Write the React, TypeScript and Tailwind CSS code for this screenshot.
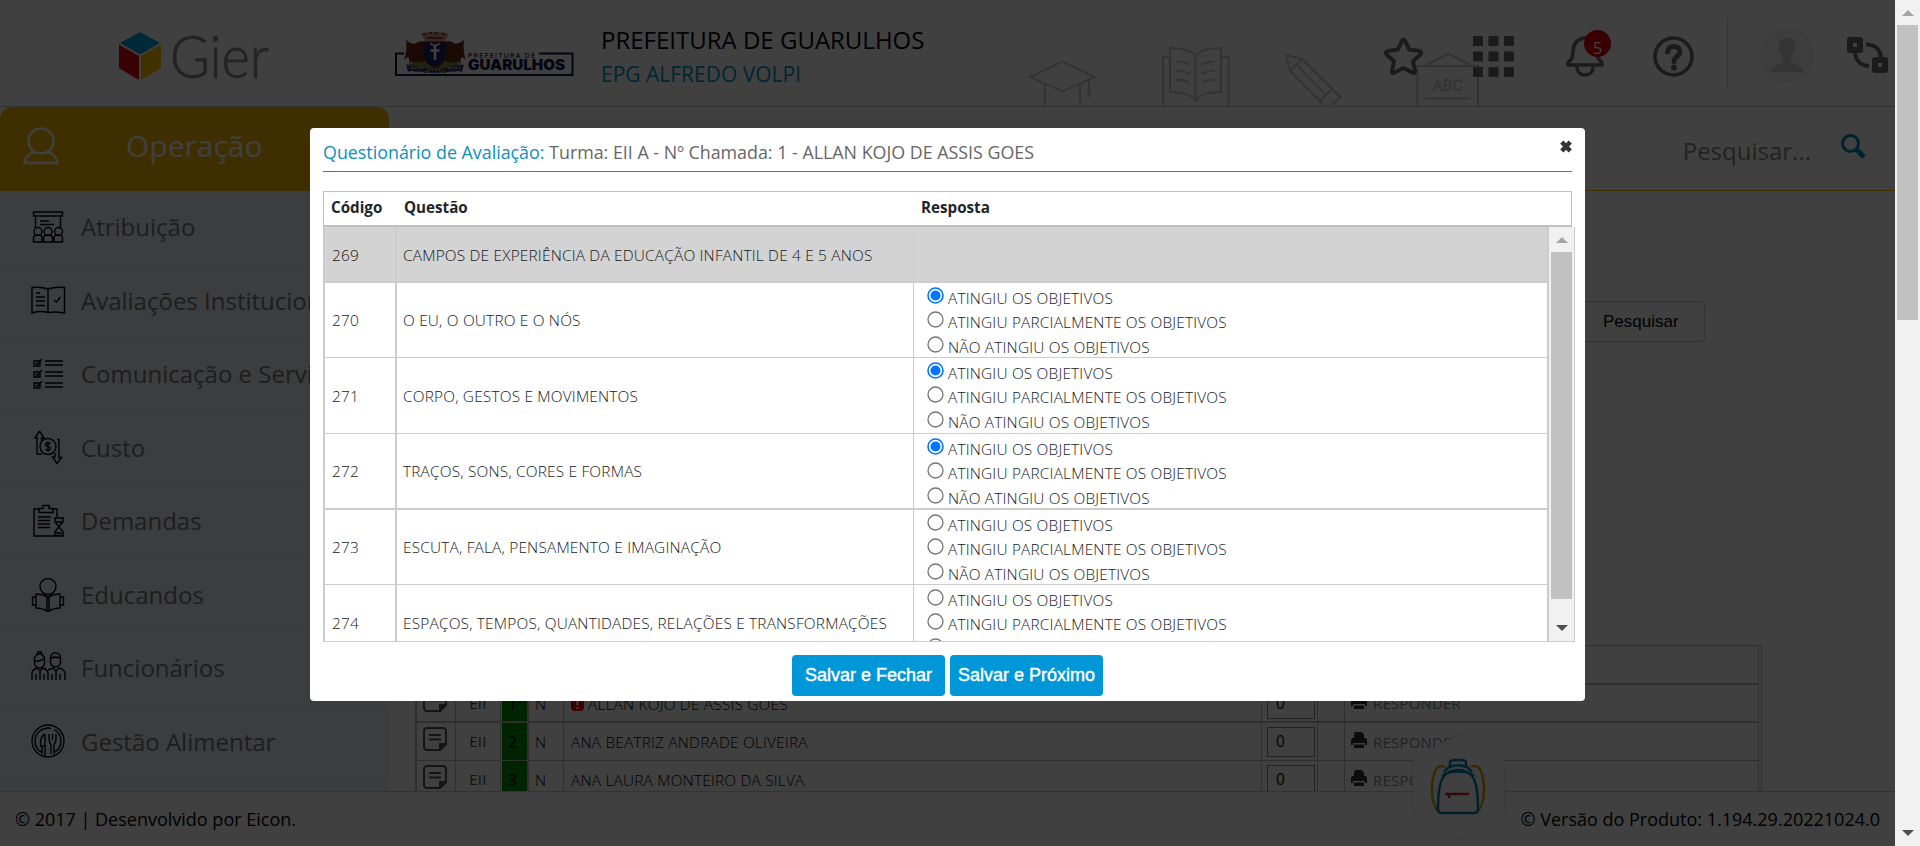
import React from "react";

type Answer = 0 | 1 | 2 | null;

interface Question {
  code: string;
  text: string;
  answer: Answer;
  rowClass: string;
}

const OPTIONS = [
  "ATINGIU OS OBJETIVOS",
  "ATINGIU PARCIALMENTE OS OBJETIVOS",
  "NÃO ATINGIU OS OBJETIVOS",
];

const QUESTIONS: Question[] = [
  { code: "270", text: "O EU, O OUTRO E O NÓS", answer: 0, rowClass: "h-[75px] border-b" },
  { code: "271", text: "CORPO, GESTOS E MOVIMENTOS", answer: 0, rowClass: "h-[76px] border-b" },
  { code: "272", text: "TRAÇOS, SONS, CORES E FORMAS", answer: 0, rowClass: "h-[76px] border-b-2" },
  { code: "273", text: "ESCUTA, FALA, PENSAMENTO E IMAGINAÇÃO", answer: null, rowClass: "h-[75px] border-b" },
  { code: "274", text: "ESPAÇOS, TEMPOS, QUANTIDADES, RELAÇÕES E TRANSFORMAÇÕES", answer: null, rowClass: "h-[76px]" },
];

const STUDENTS = [
  { n: 1, name: "ALLAN KOJO DE ASSIS GOES", alert: true, rowClass: "h-[38px] border-b-2" },
  { n: 2, name: "ANA BEATRIZ ANDRADE OLIVEIRA", alert: false, rowClass: "h-[38px] border-b" },
  { n: 3, name: "ANA LAURA MONTEIRO DA SILVA", alert: false, rowClass: "h-[38px] border-b" },
];

function GierLogo() {
  return (
    <svg className="h-[60px] w-[160px] overflow-visible" viewBox="0 0 160 60">
      <path d="M21 5 41 16 21 27.500 1 16Z" fill="#00a0d8" />
      <path d="M0 17.500 20 29V53L0 41Z" fill="#e30613" />
      <path d="M42 17.500 22 29V53L42 41Z" fill="#fcc800" />
      <text x="51" y="50.500" fill="#8c8c8c" stroke="#8c8c8c" strokeWidth="0.8" fontSize="59" fontWeight="300" textLength="99" lengthAdjust="spacingAndGlyphs" fontFamily="Lato, sans-serif">
        Gier
      </text>
    </svg>
  );
}

function CityLogo() {
  return (
    <svg className="h-[50px] w-[180px]" viewBox="0 0 180 50">
      <path d="M10 23.500H2V45H178.500V23.500H145" fill="none" stroke="#15124a" strokeWidth="2" />
      <path d="M12 9c1 3 5 4 8 5l6-3c4 1 5 4 5 8v12l-8 6c-4-1-5-3-5-6l-3 3c1-4 0-5-1-7l-4 3c2-5 3-12 2-21Z" fill="#6b2a12" />
      <path d="M70 9c-1 3-5 4-8 5l-6-3c-4 1-5 4-5 8v12l8 6c4-1 5-3 5-6l3 3c-1-4 0-5 1-7l4 3c-2-5-3-12-2-21Z" fill="#6b2a12" />
      <path d="M27 4c4-3 24-3 28 0l-4 7H31Z" fill="#c9a08c" />
      <path d="M29 4h3m3-1h3m3 0h3m4 1h3M33 8h16" stroke="#8f1d1d" strokeWidth="1.500" />
      <path d="M29 12h24v11c0 8-5 12-12 15-7-3-12-7-12-15Z" fill="#23226b" stroke="#7a1c1c" strokeWidth="1.500" />
      <path d="M41 16v14M36.500 20.500h9" stroke="#fff" strokeWidth="2.500" />
      <path d="M36.500 13c1 3 8 3 9 0" stroke="#fff" strokeWidth="1.500" fill="none" />
      <path d="M14 35c8-5 12-2 17-3l10 7 10-7c5 1 9-2 17 3l-6 7H20Z" fill="#7d8c3a" />
      <path d="M12 34c6 4 9 1 13 3s26 3 32 0 7 1 13-3l-2 8c-7-2-10-1-16 0-4 1-18 1-22 0-6-1-9-2-16 0Z" fill="#33326f" />
      <path d="M17 38h12M34 40h14M54 38h12" stroke="#c7c7d8" strokeWidth="1.500" strokeDasharray="2 1.500" />
      <path d="M30 43l4-2M48 41l4 2" stroke="#b58b1e" strokeWidth="2" />
      <text x="74" y="27.500" fill="#15124a" fontSize="6.800" fontWeight="500" textLength="67" fontFamily="Inter, sans-serif">PREFEITURA DE</text>
      <text x="74" y="39.500" fill="#15124a" fontSize="14" fontWeight="900" textLength="97" lengthAdjust="spacingAndGlyphs" fontFamily="Inter, sans-serif">GUARULHOS</text>
    </svg>
  );
}

function HeaderDrawings() {
  return (
    <svg className="absolute bottom-0 left-[1020px] h-[60px] w-[480px]" viewBox="1020 47 480 60" fill="none" stroke="#ccc" strokeWidth="2">
      <path d="M1030 78 1062.500 62.500 1095 78 1062.500 92.500ZM1045 85V107M1080 85V107M1089 80V98M1087 94h4M1087 97h4" />
      <path d="M1170 58H1163V107M1221 58H1228.500V107" />
      <path d="M1195.500 57C1191 51 1182 49 1170 49V93C1182 93 1191 95 1195.500 102C1200 95 1209 93 1221 93V49C1209 49 1200 51 1195.500 57ZV102" />
      <path d="M1176.500 62.500q7 .5 13 3M1176.500 71.500q7 .5 13 3M1176.500 80.500q7 .5 13 3M1214.500 62.500q-7 .5-13 3M1214.500 71.500q-7 .5-13 3M1214.500 80.500q-7 .5-13 3" />
      <path d="M1286 56 1302 60 1340.500 98 1332 106M1286 56 1290 72 1324 106.500M1302 60 1290 72M1296.500 66 1326 96M1332 90 1319 103" />
      <path d="M1417.500 107V67H1478V107M1426 66 1448.500 54.500 1471 66M1425 99.500H1469.500" />
      <text x="1432.500" y="92" stroke="none" fill="#c8c8c8" fontSize="17" fontWeight="500" textLength="30" lengthAdjust="spacingAndGlyphs" fontFamily="Roboto, sans-serif">ABC</text>
    </svg>
  );
}

function HeaderIcons() {
  return (
    <div className="relative flex h-full items-center text-[#6c6c6c]">
      <svg className="mt-[6px] h-[41px] w-[43px]" viewBox="0 0 43 41" fill="none" stroke="currentColor" strokeWidth="4" strokeLinejoin="round">
        <path d="M21.500 3.500c1 0 1.400.8 1.700 1.500l4 8.500 10 1.500c2.300.4 2.600 2 1.200 3.500l-7.400 6.800 2 9.700c.3 1.800-.7 2.500-2.200 1.700l-9.300-4.700-9.300 4.700c-1.500.8-2.500.1-2.200-1.700l2-9.700-7.400-6.800c-1.400-1.500-1.100-3.100 1.200-3.500l10-1.500 4-8.500c.3-.7.700-1.500 1.700-1.500Z" />
      </svg>
      <svg className="ml-[48px] mt-[7px] h-[41px] w-[41px]" viewBox="0 0 41 41" fill="currentColor">
        {[0, 15.5, 31].map((x) =>
          [0, 15.5, 31].map((y) => <rect key={`${x}-${y}`} x={x} y={y} width="10" height="10" rx="1" />)
        )}
      </svg>
      <div className="relative ml-[52px] mt-[7px] h-[41px] w-[38px]">
        <svg className="h-[41px] w-[38px]" viewBox="0 0 38 41" fill="none" stroke="currentColor" strokeWidth="3.500" strokeLinejoin="round">
          <path d="M19 2C10 3 7 9 7 16 7 22 5 24 2 26.500V29H36V26.500C33 24 31 22 31 16 31 9 28 3 19 2ZM11 31c0 5 3 8 8 8s8-3 8-8" />
        </svg>
        <span className="absolute -top-[6px] left-[18px] flex h-[27px] w-[27px] items-center justify-center rounded-full bg-[#e00008] pt-[7px] text-[17px] leading-none text-white">5</span>
      </div>
      <svg className="ml-[49px] mt-[7px] h-[41px] w-[41px]" viewBox="0 0 41 41" fill="none" stroke="currentColor">
        <circle cx="20.500" cy="20.500" r="18.500" strokeWidth="3.500" />
        <path d="M14.500 16c.5-7.500 12.500-7 12.500-.5 0 5-6 4.500-6 10" strokeWidth="5" strokeLinecap="round" />
        <circle cx="21" cy="31.500" r="3" fill="currentColor" stroke="none" />
      </svg>
      <div className="ml-[33px] mt-[2px] h-[72px] w-px bg-[#ccc]" />
      <svg className="ml-[33px] mt-[3px] h-[54px] w-[52px]" viewBox="0 0 52 54">
        <rect width="52" height="54" rx="23" fill="#f4f4f4" />
        <path d="M26 9.500c5 0 8.500 4 8 9 0 5-2 8-4 10v5c1 3 12 3 12.500 10.500h-33C10 36.500 21 36.500 22 33.500v-5c-2-2-4-5-4-10-.5-5 3-9 8-9Z" fill="#d0d0d0" />
      </svg>
      <svg className="ml-[34px] mt-[4px] h-[37px] w-[41px]" viewBox="0 0 41 37" fill="none" stroke="currentColor">
        <path d="M3 3h10v10H3ZM28 23h10v10H28Z" strokeWidth="6" strokeLinejoin="round" />
        <path d="M8 16c1 8 5 12 14 13M19 7.500c9 0 14 5 15 13" strokeWidth="4" />
      </svg>
    </div>
  );
}

function MenuIcon({ name }: { name: string }) {
  const shapes: Record<string, React.ReactNode> = {
    Atribuição: (
      <path d="M2.500 2h29v4h-29ZM4.500 6v13M29.500 6v13M9 11h9M9 14.500h14M2.500 32v-4c0-2 1-3 4.500-3s4 1 4 3v4ZM12.500 32v-4c0-2 1-3 4.500-3s4.500 1 4.500 3v4ZM23 32v-4c0-2 1-3 4.500-3s4 1 4 3v4ZM3 21.500a4 4 0 1 0 8 0a4 4 0 1 0-8 0M13 21.500a4 4 0 1 0 8 0a4 4 0 1 0-8 0M23.500 21.500a4 4 0 1 0 8 0a4 4 0 1 0-8 0" />
    ),
    "Avaliações Institucionais": (
      <path d="M17 6C12 4 7 4 1 4.500V30c5-1.500 11-2 16-.5 5-1 11-.5 16.500.5V4.500C28 4 22 4 17 6V29.500M5 10h4M5 14h9M5 18h9M5 22.500h9M23 17l2.500 2 4-5" />
    ),
    "Comunicação e Serviços": (
      <path d="M3 4h6v5H3ZM3 15h6v5H3ZM3 26h6v5H3ZM4.500 6l2 1.500L11 2M4.500 17l2 1.500L11 13M4.500 28l2 1.500L11 24M14 4h18M14 8h18M14 15h18M14 19h18M14 26h18M14 30h18" />
    ),
    Custo: (
      <path d="M8.500 1 13 8h-2.500V11M8.500 1 4 8h2V24h5M26 9.500h2v18h2.500L26 33.500 21.500 27H24V23M28 9.500v17M9 16.500a8 8 0 1 0 16 0a8 8 0 1 0-16 0M19.500 14c-1-2-5-1.500-5 .5s5 2 5 4-4 2.500-5 .5M17 11.500v10" />
    ),
    Demandas: (
      <path d="M8 5H3V32h30M22 5h4v8M8 8.500h14V4.500h-4V1.500h-6v3H8ZM7 13h13M7 16.500h12M7 20h12M7 23.500h12M23 14h10M23 31.500h10M24 14v4l4 4.500 4-4.500v-4M24 31.500v-4l4-4.500 4 4.500v4M25 18h6M25 29h6" />
    ),
    Educandos: (
      <path d="M9 9.500a8 8 0 1 0 16 0a8 8 0 1 0-16 0M17 20c-4-2-8-3-12-3v14c4 0 8 1 12 3.500 4-2.500 8-3.500 12-3.500V17c-4 0-8 1-12 3ZM16 20v14M18 20v14M5 20H1.500v8H5M29 20h3.500v8H29" />
    ),
    Funcionários: (
      <path d="M3.500 12a5 5 0 0 0 10 0V8a5 5 0 0 0-10 0ZM3.500 10c4 1 7-1 9-2M6.500 3V1h4v2M19.500 11a5 5 0 0 0 10 0V7c0-7-10-7-10 0ZM19.500 8c2-3 6-2 10-1M1 29v-6c0-3 2-5 5-6l3 3 3-3c3 1 5 3 5 6v6M5 29v-6M13 29v-6M17 19l5-2 3 3 3-3c4 1 6 3 6 6v6M21 29v-6M29 29v-6M25 20v9M9 20v9" />
    ),
    "Gestão Alimentar": (
      <path d="M1 17a16 16 0 1 0 32 0a16 16 0 1 0-32 0M4 17a13 13 0 0 0 7 11.500M30 17a13 13 0 0 1-7 11.500M4 17a13 13 0 0 1 16-12.600M23 5.500A13 13 0 0 1 30 17M14 10v22M14 10c-4 2-5 6-4.500 12H14M11 22v8M18 10v5c0 4 1.500 4 2 6v9M25 10v5c0 4-1.500 4-2 6v9M21.500 10v6" />
    ),
  };
  return (
    <svg className="h-[35px] w-[35px] shrink-0" viewBox="0 0 35 35" fill="none" stroke="#000" strokeWidth="1.400">
      {shapes[name]}
    </svg>
  );
}

const MENU = [
  "Atribuição",
  "Avaliações Institucionais",
  "Comunicação e Serviços",
  "Custo",
  "Demandas",
  "Educandos",
  "Funcionários",
  "Gestão Alimentar",
];

function Sidebar() {
  return (
    <aside className="flex w-[389px] shrink-0 flex-col bg-[#eff2f7]">
      <div className="bg-white">
        <div className="flex h-[84px] items-center rounded-t-xl bg-[#fcbc00]">
          <svg className="ml-[22px] mt-[-6px] h-[38px] w-[38px]" viewBox="0 0 38 38" fill="none" stroke="#fff" strokeWidth="2.500">
            <ellipse cx="19" cy="14" rx="12.500" ry="12.500" />
            <path d="M12 25C5 28 3 31 2.500 36h33C35 31 33 28 26 25" />
          </svg>
          <span className="ml-[66px] mt-[-6px] text-[30px] font-normal leading-none text-white">Operação</span>
        </div>
      </div>
      <nav className="flex flex-col">
        {MENU.map((item) => (
          <div key={item} className="flex h-[73.5px] items-center border-b border-[#dcdfe3] pl-[31px]">
            <MenuIcon name={item} />
            <span className="ml-[15px] whitespace-nowrap text-[24px] leading-none text-[#777]">{item}</span>
          </div>
        ))}
      </nav>
    </aside>
  );
}

function NoteIcon() {
  return (
    <svg className="h-[24px] w-[24px]" viewBox="0 0 24 24" fill="none" stroke="#555" strokeWidth="2">
      <path d="M3 1h18l2 2v14l-6 6H3l-2-2V3ZM6 8h12M6 12.500h12" />
      <path d="M23 17h-6v6Z" fill="#555" />
    </svg>
  );
}

function PrinterIcon() {
  return (
    <svg className="h-[16px] w-[16px]" viewBox="0 0 16 16" fill="#333">
      <path d="M4 0h7l2 3v3H3V3ZM0 8l1-2h14l1 2v5h-2v-2H2v2H0ZM3 12.500h10V16H3Z" />
    </svg>
  );
}

function StudentTable() {
  return (
    <div className="ml-[26px] mt-[454px] flex h-[147px] w-[1347px] flex-col overflow-hidden border-l-2 border-r border-t border-[#bbb] pr-[2px] text-[15.4px] font-light tracking-[0.2px] text-black">
      <div className="h-[39px] shrink-0 border-b-2 border-r border-[#bbb]" />
      {STUDENTS.map((s) => (
        <div key={s.n} className={`flex shrink-0 border-r border-[#bbb] ${s.rowClass}`}>
          <div className="flex w-[39px] items-center border-r border-[#bbb] pb-[6px] pl-[6px]"><NoteIcon /></div>
          <div className="flex w-[45px] items-center justify-center border-r border-[#bbb] text-[15px] font-normal text-[#444]">EII</div>
          <div className="flex w-[28px] border-r-2 border-[#bbb] pl-px">
            <div className="flex h-full w-[25px] items-center justify-center bg-[#008c00] pr-1 pt-[3px] font-normal">{s.n}</div>
          </div>
          <div className="flex w-[35px] items-center border-r border-[#bbb] pl-[6px] pt-[3px]">N</div>
          <div className="flex w-[698px] items-center border-r border-[#bbb] pl-[7px] pt-[3px]">
            {s.alert && (
              <svg className="mr-1 h-[13px] w-[13px]" viewBox="0 0 13 13">
                <rect width="13" height="13" rx="4" fill="#f00000" />
                <path d="M6.500 2.500v5M6.500 9v2" stroke="#fff" strokeWidth="2" />
              </svg>
            )}
            {s.name}
          </div>
          <div className="w-[56px] border-r border-[#bbb] pl-[5px] pt-[4px]">
            <div className="flex h-[30px] w-[48px] items-center border border-[#888] pl-[8px] font-normal text-black">0</div>
          </div>
          <div className="w-[27px] border-r border-[#bbb]" />
          <div className="flex items-center gap-[6px] pl-[6px]">
            <span className="pb-[4px]"><PrinterIcon /></span>
            <span className="pt-px text-[15px] font-normal text-[#888]">RESPONDER</span>
          </div>
        </div>
      ))}
    </div>
  );
}

function Content() {
  return (
    <main className="flex min-w-0 flex-1 flex-col">
      <div className="flex h-[84px] shrink-0 items-center justify-end border-b border-[#fcbc00] pr-[29px]">
        <span className="mr-[30px] mt-[4px] text-[24px] leading-none text-[#888]">Pesquisar...</span>
        <svg className="mb-[5px] h-[25px] w-[25px]" viewBox="0 0 25 25" fill="none" stroke="#0088bb">
          <circle cx="9.500" cy="9.500" r="8" strokeWidth="3" />
          <path d="m15.500 15.500 7.500 7.500" strokeWidth="5" />
        </svg>
      </div>
      <div className="relative flex-1 overflow-hidden">
        <button className="absolute left-[1168px] top-[110px] flex h-[41px] w-[148px] items-center rounded border border-[#ccc] pl-[45px] font-['Liberation_Sans',sans-serif] text-[17px] text-black">
          Pesquisar
        </button>
        <StudentTable />
      </div>
    </main>
  );
}

function Backpack() {
  return (
    <svg className="absolute bottom-[5px] left-[1412px] h-[108px] w-[94px]" viewBox="0 0 94 108" fill="none">
      <path d="M47 1 93 27V80L47 107 1 80V27Z" fill="#fff" stroke="#ececec" strokeWidth="1.500" />
      <g strokeWidth="2.500">
        <path d="M33 34C24 29 20 42 20 57c0 10 3 18 7 22M59 34c9-5 13 8 13 23 0 10-3 18-7 22" stroke="#d6a800" />
        <path d="M38 33v-4q1-2 4-2h8q3 0 4 2v4M32 39c6-9 22-9 28 0M30 43c8-6 25-6 32 0M26 76c0-25 3-39 20-39s20 14 20 39q0 4-4 4H30q-4 0-4-4Z" stroke="#0084b0" />
        <path d="M33 61H57M37 61v4" stroke="#d81e28" />
      </g>
    </svg>
  );
}

function Arrow({ up, className }: { up?: boolean; className: string }) {
  return (
    <svg className={`h-[6px] w-[12px] shrink-0 ${className}`} viewBox="0 0 12 6">
      <path d={up ? "M6 0 12 6H0Z" : "M0 0H12L6 6Z"} fill="currentColor" />
    </svg>
  );
}

function Radio({ checked }: { checked: boolean }) {
  return (
    <svg className="h-[17px] w-[17px] shrink-0" viewBox="0 0 17 17">
      <circle cx="8.500" cy="8.500" r="7.500" fill="#fff" stroke={checked ? "#0075ff" : "#767676"} strokeWidth={checked ? 1.6 : 1.3} />
      {checked && <circle cx="8.500" cy="8.500" r="5" fill="#0075ff" />}
    </svg>
  );
}

function Modal() {
  return (
    <div className="flex h-[573px] w-[1275px] flex-col rounded bg-white">
      <div className="ml-[13px] flex h-[44px] w-[1249px] items-center justify-between border-b border-[#0b8fbf] pt-[6px] text-[17.85px] leading-none">
        <h2 className="mt-px text-[#666]">
          <span className="text-[#0b8fbf]">Questionário de Avaliação:</span> Turma: EII A - Nº Chamada: 1 - ALLAN KOJO DE ASSIS GOES
        </h2>
        <svg className="mt-[-13px] h-[13px] w-[12px]" viewBox="0 0 12 13" stroke="#333" strokeWidth="4.500">
          <path d="m1.800 2 8.400 9M10.200 2l-8.400 9" />
        </svg>
      </div>
      <div className="ml-[13px] mt-[19px] flex h-[36px] w-[1249px] items-center border border-b-2 border-[#c0c0c0] pb-px text-[15.2px] font-bold leading-none text-[#212529]">
        <span className="w-[73px] pl-[7px]">Código</span>
        <span className="w-[517px] pl-[7px]">Questão</span>
        <span className="pl-[7px]">Resposta</span>
      </div>
      <div className="ml-[13px] flex h-[415px] w-[1252px] overflow-hidden border-b border-r border-[#ccc] text-[15.4px] font-light leading-none tracking-[0.19px] text-[#16191c]">
        <div className="flex w-[1226px] shrink-0 flex-col border-l-2 border-r-2 border-[#ccc]">
          <div className="flex h-[56px] shrink-0 border-b-2 border-[#ccc] bg-[#d3d3d3]">
            <div className="flex w-[72px] items-center border-r-2 border-[#ccc] pl-[7px] pt-[4px]">269</div>
            <div className="flex w-[517px] items-center border-r border-[#ccc] pl-[6px] pt-[4px]">
              CAMPOS DE EXPERIÊNCIA DA EDUCAÇÃO INFANTIL DE 4 E 5 ANOS
            </div>
          </div>
          {QUESTIONS.map((q) => (
            <div key={q.code} className={`flex shrink-0 border-[#ccc] ${q.rowClass}`}>
              <div className="flex w-[72px] items-center border-r-2 border-[#ccc] pl-[7px] pt-[2px]">{q.code}</div>
              <div className="flex w-[517px] items-center border-r border-[#ccc] pl-[6px] pt-[2px]">{q.text}</div>
              <div className="flex flex-col pl-[13px] pt-[4px]">
                {OPTIONS.map((o, i) => (
                  <label key={o} className="flex h-[24.4px] shrink-0 items-start gap-[4px]">
                    <Radio checked={q.answer === i} />
                    <span className="pt-[4px]">{o}</span>
                  </label>
                ))}
              </div>
            </div>
          ))}
        </div>
        <div className="flex w-[25px] flex-col items-center bg-[#f1f1f1]">
          <Arrow up className="mt-[10px] text-[#a3a3a3]" />
          <div className="mt-[9px] h-[347px] w-[21px] shrink-0 bg-[#c1c1c1]" />
          <Arrow className="mt-[26px] text-[#505050]" />
        </div>
      </div>
      <div className="mt-[13px] flex justify-center gap-[5px] font-['Liberation_Sans',sans-serif] text-[18px] text-white">
        {["Salvar e Fechar", "Salvar e Próximo"].map((label) => (
          <button key={label} className="h-[41px] w-[153px] whitespace-nowrap rounded bg-[#0097d8] [-webkit-text-stroke:0.4px_white]">
            {label}
          </button>
        ))}
      </div>
    </div>
  );
}

export default function App() {
  return (
    <div className="flex h-[846px] w-full overflow-hidden bg-white font-['Open_Sans',sans-serif]">
      <div className="relative flex min-w-0 flex-1 flex-col">
        <header className="relative flex h-[107px] shrink-0 items-center border-b border-[#ccc]">
          <HeaderDrawings />
          <div className="ml-[119px] mt-[8px]"><GierLogo /></div>
          <div className="ml-[115px] mt-[4px]"><CityLogo /></div>
          <div className="ml-[27px] mt-[8px] flex flex-col">
            <span className="text-[24px] font-normal leading-[34px] text-black">PREFEITURA DE GUARULHOS</span>
            <span className="text-[21px] font-normal leading-[34px] text-[#0093c8]">EPG ALFREDO VOLPI</span>
          </div>
          <div className="ml-auto h-full pr-[7px]"><HeaderIcons /></div>
        </header>
        <div className="flex min-h-0 flex-1 overflow-hidden">
          <Sidebar />
          <Content />
        </div>
        <footer className="flex h-[55px] shrink-0 items-center justify-between border-t border-[#ccc] pl-[15px] pr-[15px] text-[18px] text-black">
          <span>© 2017 | Desenvolvido por Eicon.</span>
          <span>© Versão do Produto: 1.194.29.20221024.0</span>
        </footer>
        <Backpack />
        <div className="absolute inset-0 flex items-start justify-center bg-black/75 pt-[128px]">
          <Modal />
        </div>
      </div>
      <div className="flex w-[25px] shrink-0 flex-col items-center bg-[#f1f1f1]">
        <Arrow up className="mt-[10px] text-[#a3a3a3]" />
        <div className="mt-[9px] h-[295px] w-[21px] shrink-0 bg-[#c1c1c1]" />
        <Arrow className="mb-[10px] mt-auto text-[#505050]" />
      </div>
    </div>
  );
}
